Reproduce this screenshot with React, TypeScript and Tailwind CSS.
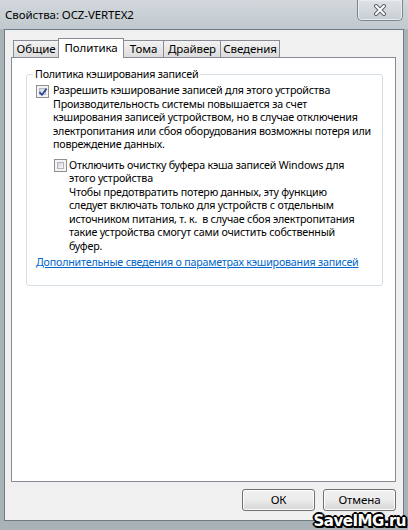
import React from "react"

const Checkbox = ({ checked }: { checked?: boolean }) => {
  return (
    <div className="relative w-[13px] h-[13px] shrink-0 border border-[#8f8f8f] bg-[#f4f4f4] p-[2px]">
      <div className="w-full h-full border border-[#b3b7bd] bg-gradient-to-br from-[#cfd3d8] via-[#e6e8ea] to-[#fbfbfb]" />
      {checked && (
        <svg
          className="absolute left-[1px] top-[1px]"
          width="10"
          height="10"
          viewBox="0 0 10 10"
        >
          <path
            d="M1.5 5.2 L4 7.8 L8.6 1.6"
            fill="none"
            stroke="#2a4a9c"
            strokeWidth="1.8"
            strokeLinejoin="round"
          />
        </svg>
      )}
    </div>
  )
}

const tabs = [
  { name: "Общие", w: "w-[46px]" },
  { name: "Политика", w: "w-[66px]", active: true },
  { name: "Тома", w: "w-[41px]" },
  { name: "Драйвер", w: "w-[58px]" },
  { name: "Сведения", w: "w-[60px]" }
]

const Button = ({ label }: { label: string }) => (
  <div className="w-[73px] h-[22px] flex items-center justify-center rounded-[3px] border border-[#707070] bg-gradient-to-b from-[#f2f2f2] via-[#ebebeb] to-[#d6d6d6] shadow-[inset_0_0_0_1px_#fcfcfc] text-[11.5px] tracking-[-0.1px]">
    {label}
  </div>
)

export default function App() {
  return (
    <div className="relative w-[408px] h-[530px] overflow-hidden flex flex-col bg-[#a9b2b7] font-['Noto_Sans',sans-serif] text-black">
      {/* title bar */}
      <div className="h-[29px] shrink-0 flex items-start bg-gradient-to-b from-[#d2d8dc] to-[#c1c9ce]">
        <span className="pl-[5px] pt-[7px] text-[11.5px] leading-[16px] tracking-[-0.1px]">
          Свойства: OCZ-VERTEX2
        </span>
        <div className="ml-auto mr-[5px] w-[46px] h-[21px] flex items-center justify-center rounded-b-[5px] border border-t-0 border-[#7b868d] bg-gradient-to-b from-[#dfe3e6] to-[#c7ced2] shadow-[inset_0_0_0_1px_#e9edef]">
          <svg width="14" height="12" viewBox="0 0 14 12">
            <path
              d="M3 2 L11 10 M11 2 L3 10"
              stroke="#5d666c"
              strokeWidth="4"
              strokeLinecap="round"
            />
            <path
              d="M3 2 L11 10 M11 2 L3 10"
              stroke="#ffffff"
              strokeWidth="2"
              strokeLinecap="round"
            />
          </svg>
        </div>
      </div>

      {/* client area */}
      <div className="flex-1 mx-[4px] mb-[9px] flex flex-col border border-[#6f7b82] bg-[#f0f0f0] pt-[8px] pl-[6px] pr-[7px]">
        <div className="relative z-10 flex items-end h-[19px] pl-[2px]">
          {tabs.map((t, i) =>
            t.active ? (
              <div
                key={t.name}
                className={`${t.w} h-[20px] -mb-px ${i > 0 ? "-ml-px" : ""} flex justify-center pt-[1px] border border-b-0 border-[#898c95] bg-white text-[11.5px] leading-[16px] tracking-[-0.1px]`}
              >
                {t.name}
              </div>
            ) : (
              <div
                key={t.name}
                className={`${t.w} h-[17px] ${i > 0 ? "-ml-px" : ""} flex justify-center border border-b-0 border-[#898c95] bg-gradient-to-b from-[#f3f3f3] to-[#dcdcdc] text-[11.5px] leading-[16px] tracking-[-0.1px]`}
              >
                {t.name}
              </div>
            )
          )}
        </div>

        <div className="flex-1 border border-[#898c95] bg-white pt-[16px] pl-[14px] pr-[12px]">
          <div className="relative h-[212px] rounded-[3px] border border-[#d5dfe5] pt-[9px] pl-[9px] text-[10.7px] leading-[13.5px] tracking-[-0.2px]">
            <span className="absolute left-[6px] top-[-8px] bg-white px-[2px] leading-[14px] whitespace-nowrap">
              Политика кэширования записей
            </span>

            <div className="flex items-start gap-[4px]">
              <div className="pt-[0.5px]">
                <Checkbox checked />
              </div>
              <div className="whitespace-nowrap">
                <div>Разрешить кэширование записей для этого устройства</div>
                <div>Производительность системы повышается за счет</div>
                <div>кэширования записей устройством, но в случае отключения</div>
                <div>электропитания или сбоя оборудования возможны потеря или</div>
                <div>повреждение данных.</div>
              </div>
            </div>

            <div className="flex items-start gap-[2px] mt-[7px] pl-[18px]">
              <div className="pt-[0.5px]">
                <Checkbox />
              </div>
              <div className="whitespace-nowrap">
                <div>Отключить очистку буфера кэша записей Windows для</div>
                <div>этого устройства</div>
                <div>Чтобы предотвратить потерю данных, эту функцию</div>
                <div>следует включать только для устройств с отдельным</div>
                <div>источником питания, т. к.&nbsp; в случае сбоя электропитания</div>
                <div>такие устройства смогут сами очистить собственный</div>
                <div>буфер.</div>
              </div>
            </div>

            <div className="mt-[3px] whitespace-nowrap text-[#0066cc] underline underline-offset-[1px]">
              Дополнительные сведения о параметрах кэширования записей
            </div>
          </div>
        </div>

        <div className="flex justify-end gap-[8px] mt-[7px] mb-[9px]">
          <Button label="ОК" />
          <Button label="Отмена" />
        </div>
      </div>

      <div className="absolute right-[2px] bottom-0 font-['DejaVu_Sans',sans-serif] font-bold text-[15px] leading-[18px] text-white tracking-[-0.5px] [text-shadow:1px_1px_0_#000,-1px_-1px_0_#000,1px_-1px_0_#000,-1px_1px_0_#000,2px_0_0_#000,-2px_0_0_#000,0_2px_0_#000,0_-2px_0_#000,2px_2px_0_#000]">
        SaveIMG.ru
      </div>
    </div>
  )
}
